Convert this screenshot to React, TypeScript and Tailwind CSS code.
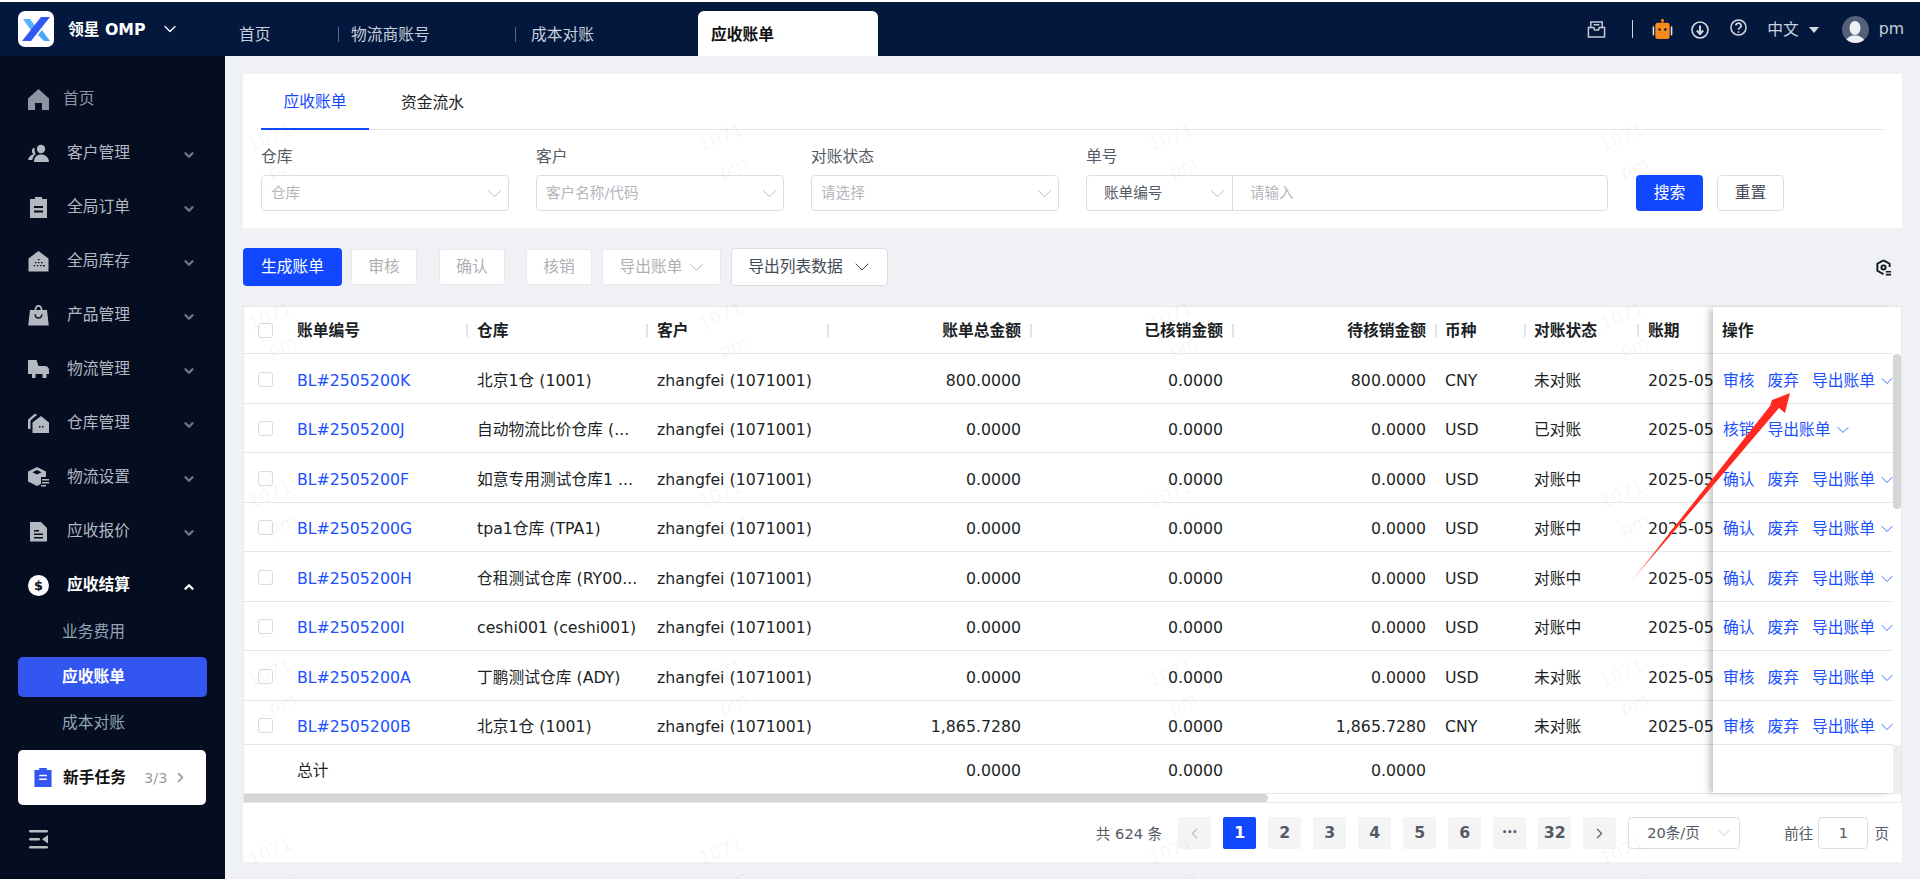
import { ChevronDown, ChevronLeft, ChevronRight, ChevronUp } from "lucide-react";
import type { ReactNode } from "react";

const FONT = "[font-family:'DejaVu_Sans','Noto_Sans_CJK_SC',sans-serif]";

// left block of the table: column width, cell padding and alignment
const COLS = [
  "w-[44px] pl-[14px]",
  "w-[180px] pl-[9px]",
  "w-[180px] pl-[9px]",
  "w-[181px] pl-[9px]",
  "w-[203px] pr-[11px] justify-end",
  "w-[202px] pr-[11px] justify-end",
  "w-[203px] pr-[11px] justify-end",
  "w-[89px] pl-[8px]",
  "w-[113px] pl-[8px]",
  "w-[75px] pl-[9px]",
];

const HEADS = ["", "账单编号", "仓库", "客户", "账单总金额", "已核销金额", "待核销金额", "币种", "对账状态", "账期"];

const ROWS = [
  { no: "BL#2505200K", wh: "北京1仓 (1001)", total: "800.0000", done: "0.0000", rest: "800.0000", cur: "CNY", st: "未对账", acts: ["审核", "废弃"] },
  { no: "BL#2505200J", wh: "自动物流比价仓库 (...", total: "0.0000", done: "0.0000", rest: "0.0000", cur: "USD", st: "已对账", acts: ["核销"] },
  { no: "BL#2505200F", wh: "如意专用测试仓库1 ...", total: "0.0000", done: "0.0000", rest: "0.0000", cur: "USD", st: "对账中", acts: ["确认", "废弃"] },
  { no: "BL#2505200G", wh: "tpa1仓库 (TPA1)", total: "0.0000", done: "0.0000", rest: "0.0000", cur: "USD", st: "对账中", acts: ["确认", "废弃"] },
  { no: "BL#2505200H", wh: "仓租测试仓库 (RY00...", total: "0.0000", done: "0.0000", rest: "0.0000", cur: "USD", st: "对账中", acts: ["确认", "废弃"] },
  { no: "BL#2505200I", wh: "ceshi001 (ceshi001)", total: "0.0000", done: "0.0000", rest: "0.0000", cur: "USD", st: "对账中", acts: ["确认", "废弃"] },
  { no: "BL#2505200A", wh: "丁鹏测试仓库 (ADY)", total: "0.0000", done: "0.0000", rest: "0.0000", cur: "USD", st: "未对账", acts: ["审核", "废弃"] },
  { no: "BL#2505200B", wh: "北京1仓 (1001)", total: "1,865.7280", done: "0.0000", rest: "1,865.7280", cur: "CNY", st: "未对账", acts: ["审核", "废弃"] },
];

const Ico = ({ children }: { children: ReactNode }) => (
  <svg viewBox="0 0 21 21" className="size-[21px] shrink-0" fill="currentColor">{children}</svg>
);

const MENU: { label: string; icon: ReactNode }[] = [
  { label: "客户管理", icon: <Ico><circle cx="13" cy="6" r="4.2" /><path d="M6 19c0-5 3-7.5 7-7.5s8 2.5 8 7.5zM6.5 4.5a3.4 3.4 0 0 0-.8 6.4C3 11.800.3 14 0 17h4.200c.5-2.500 1.800-4.500 3.500-5.700C6.800 9.500 6.500 7 6.500 4.500z" /></Ico> },
  { label: "全局订单", icon: <Ico><path fillRule="evenodd" d="M7 0h7v2h5v19H2V2h5zM6 9v2h9V9zm0 4.500v2h9v-2z" /></Ico> },
  { label: "全局库存", icon: <Ico><path fillRule="evenodd" d="M10.500 0 20.500 7.500V20.500H.5V7.500zM7 11v1.300h1.500V11zm3 0v1.300h1.500V11zm3 0v1.300h1.500V11zM5.500 14v1.300H7V14zm3.300 0v1.300h1.500V14zm3.200 0v1.300h1.500V14zm3 0v1.300H17V14zM10 8v1.300h1.500V8z" /></Ico> },
  { label: "产品管理", icon: <Ico><path fillRule="evenodd" d="M6.500 5C6.500 2 8.200 0 10.500 0s4 2 4 5H19l1.800 15.500H.2L2 5zm1.800 0h4.400c0-1.800-.9-3.200-2.200-3.200S8.300 3.200 8.300 5zM6.300 9.500c.4 2.800 2 4.300 4.200 4.300s3.800-1.500 4.200-4.300l-1.300-.3c-.3 2-1.400 3.100-2.900 3.100S7.900 11.200 7.600 9.200z" /></Ico> },
  { label: "物流管理", icon: <Ico><path d="M0 1h8.500l2 6H17c2.500 0 4 1.800 4 4v4h-2.500v4h-4v-4h-7v4H4v-4H0z" /></Ico> },
  { label: "仓库管理", icon: <Ico><path fillRule="evenodd" d="M13 3 21 9.500V20H4.500V9.500zM11 13v1.500h1.500V13zm3 0v1.500h1.500V13z" /><path d="M7 .5 9 2 2.500 7.500V16H0V6.500z" /></Ico> },
  { label: "物流设置", icon: <Ico><path fillRule="evenodd" d="M9 0 18 4.500V10h-5v7l-4 2-9-4.500V4.500zM9 3 4.500 5.300 9 7.500l4.500-2.200z" /><path d="M14 12h7v1.500h-7zM14 15h7v1.500h-7zM13 18h5v1.500h-5z" /></Ico> },
  { label: "应收报价", icon: <Ico><path fillRule="evenodd" d="M2 1h11l6 6v13.500H2zM6 9v1.500h5V9zm0 3.500V14h9v-1.500zM6 16v1.500h9V16z" /></Ico> },
];

function Sidebar() {
  return (
    <aside className="flex w-[225px] shrink-0 flex-col bg-[#050d20] pt-[16px]">
      <div className="flex h-[54px] items-center pl-[28px] text-[#8e94a1]">
        <Ico><path d="M10.500 0 21 9.500V21h-7v-7H7v7H0V9.500z" /></Ico>
        <span className="ml-[14px] text-[15.750px]">首页</span>
      </div>
      {MENU.map((m) => (
        <div key={m.label} className="flex h-[54px] items-center pl-[28px] pr-[29px] text-[#b4b8c0]">
          {m.icon}
          <span className="ml-[18px] flex-1 text-[15.750px]">{m.label}</span>
          <ChevronDown className="mt-[3px] size-[14px] text-[#71757f]" strokeWidth={4} />
        </div>
      ))}
      <div className="flex h-[54px] items-center pl-[28px] pr-[29px] text-white">
        <svg viewBox="0 0 21 21" className="size-[21px] shrink-0">
          <circle cx="10.500" cy="10.500" r="10.500" fill="#fff" />
          <text x="10.500" y="15" textAnchor="middle" fontSize="13" fontWeight="700" fill="#050d20">$</text>
        </svg>
        <span className="ml-[18px] flex-1 text-[15.750px] font-bold">应收结算</span>
        <ChevronUp className="mt-[3px] size-[14px]" strokeWidth={4} />
      </div>
      <div className="flex h-[40px] items-center pl-[62px] text-[15.750px] text-[#93a5b8]">业务费用</div>
      <div className="mx-[18px] mt-[5px] flex h-[40px] w-[189px] items-center rounded-[5px] bg-[#3355f0] pl-[44px] text-[15.750px] font-bold text-white">应收账单</div>
      <div className="mt-[5px] flex h-[41px] items-center pl-[62px] text-[15.750px] text-[#93a5b8]">成本对账</div>
      <div className="mx-[18px] mt-[7px] flex h-[55px] w-[188px] items-center rounded-[5px] bg-white pl-[16px]">
        <svg viewBox="0 0 18 20" className="h-[19px] w-[18px] shrink-0" fill="#3355f0">
          <path fillRule="evenodd" d="M5 0h8v2h5v18H0V2h5zM5 7v1.600h8V7zm0 4v1.600h8V11z" />
        </svg>
        <span className="ml-[11px] text-[15.750px] font-bold text-[#111]">新手任务</span>
        <span className="ml-[18px] whitespace-nowrap text-[14.600px] text-[#9a9ca3]">3/3</span>
        <ChevronRight className="ml-[5px] size-[15px] text-[#a3a7b0]" strokeWidth={3} />
      </div>
      <svg viewBox="0 0 19 19" className="ml-[29px] mt-[25px] size-[19px]" fill="#b9bcc3">
        <rect y="0" width="19" height="2.600" rx="1.300" />
        <rect y="8" width="11" height="2.600" rx="1.300" />
        <rect y="16" width="19" height="2.600" rx="1.300" />
        <path d="M19 5v8.500L13 9.300z" />
      </svg>
    </aside>
  );
}

function TopBar() {
  return (
    <header className="flex h-[54px] shrink-0 items-center bg-[#04183d] text-[#c8d0dc]">
      <svg viewBox="0 0 36 36" className="ml-[18px] size-[36px] shrink-0">
        <rect width="36" height="36" rx="7" fill="#fff" />
        <path d="M5 8h7l6 8-4 5z" fill="#47a7ff" opacity=".9" />
        <path d="M23 6h9L13 30H4z" fill="#3158f0" />
        <path d="M20 24l4-5 8 11h-6z" fill="#47a7ff" />
      </svg>
      <span className="ml-[14px] mt-[2px] w-[82px] whitespace-nowrap text-[15.750px] font-bold text-white">领星 OMP</span>
      <ChevronDown className="ml-[10px] size-[20px] text-white" strokeWidth={1.500} />
      <span className="ml-[59px] mt-[12px] w-[32px] text-[15.750px]">首页</span>
      <i className="ml-[67px] mt-[10px] h-[15px] w-px bg-[#5a6780]" />
      <span className="ml-[12px] mt-[12px] w-[79px] text-[15.750px]">物流商账号</span>
      <i className="ml-[85px] mt-[10px] h-[15px] w-px bg-[#5a6780]" />
      <span className="ml-[15px] mt-[12px] w-[64px] text-[15.750px]">成本对账</span>
      <div className="ml-[103px] mt-[9px] flex h-[45px] w-[180px] items-center rounded-t-[6px] bg-white pl-[13px] pt-[2px] text-[15.750px] font-bold text-[#111]">应收账单</div>
      <div className="ml-auto flex items-center pr-[16px]">
        <svg viewBox="0 0 20 20" className="size-[19px]" fill="none" stroke="#c3c9d3" strokeWidth="1.600">
          <path d="M4 8V2h12v6M1.500 8H7l1 2.500h4L13 8h5.500v10h-17zM7 5h6" />
        </svg>
        <i className="ml-[26px] h-[18px] w-px bg-[#cfd4dc]" />
        <svg viewBox="0 0 22 22" className="ml-[19px] size-[21px]">
          <path d="M10.200 0h1.600v4h-1.600z" fill="#f98b1a" />
          <circle cx="11" cy="1.500" r="1.500" fill="#f98b1a" />
          <rect x="3.500" y="4" width="15" height="17" rx="2.500" fill="#f98b1a" />
          <circle cx="8" cy="11" r="1.300" fill="#04173a" />
          <circle cx="14" cy="11" r="1.300" fill="#04173a" />
          <path d="M1.500 8.500v8M20.500 8.500v8" stroke="#e8e8e8" strokeWidth="1.600" strokeLinecap="round" />
        </svg>
        <svg viewBox="0 0 18 18" className="ml-[18px] mt-[2px] size-[18px]" fill="none" stroke="#d4d9e0" strokeWidth="1.600">
          <circle cx="9" cy="9" r="8" />
          <path d="M9 4.500v8M5.800 9.500 9 13l3.200-3.500" strokeWidth="2" />
        </svg>
        <svg viewBox="0 0 18 18" className="ml-[21px] mb-[3px] size-[17px]" fill="none" stroke="#d4d9e0" strokeWidth="1.600">
          <circle cx="9" cy="9" r="8" />
          <path d="M6.300 7a2.700 2.700 0 1 1 4 2.400C9.300 10 9 10.500 9 11.500M9 13v1.500" strokeWidth="1.800" />
        </svg>
        <span className="ml-[20px] mt-[1px] text-[15.750px]">中文</span>
        <span className="ml-[10px] mt-[1px] border-x-[5px] border-t-[6px] border-x-transparent border-t-[#d4d9e0]" />
        <div className="ml-[23px] flex size-[27px] items-end justify-center overflow-hidden rounded-full bg-[#53617a]">
          <svg viewBox="0 0 24 24" className="size-[24px]" fill="#eef0f3">
            <ellipse cx="12" cy="9" rx="5.500" ry="7" />
            <path d="M2 24c0-5 5-6 7-7.500h6c2 1.500 7 2.500 7 7.500z" />
          </svg>
        </div>
        <span className="ml-[10px] text-[15.750px]">pm</span>
      </div>
    </header>
  );
}

const Field = ({ label, text, width = "w-[247.500px]" }: { label: string; text: string; width?: string }) => (
  <div className={`flex flex-col ${width}`}>
    <label className="flex h-[22px] items-center pt-[2px] text-[15.750px] text-[#555b66]">{label}</label>
    <div className="mt-[8px] flex h-[36px] items-center justify-between rounded-[4px] border border-[#dcdee4] pl-[9px] pr-px text-[14.600px] text-[#b4b6bc]">
      {text}
      <ChevronDown className="size-[25px] text-[#b8bcc5]" strokeWidth={0.900} />
    </div>
  </div>
);

function FilterCard() {
  return (
    <section className="h-[154px] bg-white px-[18px]">
      <div className="flex h-[56px] border-b border-[#e4e6ec]">
        <div className="flex h-[56px] w-[108px] items-center justify-center border-b-2 border-[#1147ff] pt-[2px] text-[15.750px] text-[#1147ff]">应收账单</div>
        <div className="ml-[32px] flex items-center pt-[2px] text-[15.750px] text-[#222]">资金流水</div>
      </div>
      <div className="mt-[15px] flex items-end">
        <div className="flex gap-[27.500px]">
          <Field label="仓库" text="仓库" />
          <Field label="客户" text="客户名称/代码" />
          <Field label="对账状态" text="请选择" />
        </div>
        <div className="ml-[27.500px] w-[522px]">
          <label className="flex h-[22px] items-center pt-[2px] text-[15.750px] text-[#555b66]">单号</label>
          <div className="mt-[8px] flex h-[36px] rounded-[4px] border border-[#dcdee4] text-[14.600px]">
            <div className="flex w-[146px] items-center justify-between border-r border-[#dcdee4] pl-[17px] pr-[2px] text-[#555b66]">
              账单编号
              <ChevronDown className="size-[25px] text-[#b8bcc5]" strokeWidth={0.900} />
            </div>
            <div className="flex items-center pl-[17px] text-[#b4b6bc]">请输入</div>
          </div>
        </div>
        <button className="ml-[28px] h-[36px] w-[67px] rounded-[4px] bg-[#1147ff] text-[15.750px] text-white">搜索</button>
        <button className="ml-[14px] h-[36px] w-[67px] rounded-[4px] border border-[#dcdee4] text-[15.750px] text-[#444a55]">重置</button>
      </div>
    </section>
  );
}

const GhostBtn = ({ children, width }: { children: ReactNode; width: string }) => (
  <button className={`flex h-[36px] items-center justify-center rounded-[3px] border border-[#e8e9ee] bg-white text-[15.750px] text-[#adafb5] ${width}`}>{children}</button>
);

function Toolbar() {
  return (
    <div className="mt-[20px] flex h-[38px] items-center">
      <button className="h-[38px] w-[99px] rounded-[4px] bg-[#1147ff] text-[15.750px] text-white">生成账单</button>
      <div className="ml-[9px]"><GhostBtn width="w-[66px]">审核</GhostBtn></div>
      <div className="ml-[22px]"><GhostBtn width="w-[66px]">确认</GhostBtn></div>
      <div className="ml-[21px]"><GhostBtn width="w-[66px]">核销</GhostBtn></div>
      <div className="ml-[10px]">
        <GhostBtn width="w-[119px] gap-[2px] pl-[4px]">导出账单<ChevronDown className="size-[23px]" strokeWidth={1} /></GhostBtn>
      </div>
      <button className="ml-[10px] flex h-[38px] w-[157px] items-center justify-center gap-[7px] rounded-[4px] border border-[#dcdee4] bg-white pl-[3px] text-[15.750px] text-[#444a55]">
        导出列表数据
        <ChevronDown className="size-[24px]" strokeWidth={1} />
      </button>
      <svg viewBox="0 0 18 18" className="ml-auto mr-[10px] size-[17px]" fill="none" stroke="#11151d" strokeWidth="2">
        <path d="M9 1.500 15.500 5v3.500M9 16 2.500 12.500V5L9 1.500" />
        <circle cx="9" cy="9" r="2.200" />
        <path d="M11.500 13.500h5.500M11.500 16.500h5.500" strokeWidth="1.800" />
      </svg>
    </div>
  );
}

const Check = ({ inRow }: { inRow?: boolean }) => (
  <span className={`block size-[15px] rounded-[3px] border border-[#d9dade] bg-white ${inRow ? "mb-[3px]" : ""}`} />
);

function Actions({ acts }: { acts: string[] }) {
  return (
    <div className="flex items-center gap-[13px] whitespace-nowrap pl-[10px] text-[15.750px] text-[#1a50ff]">
      {acts.map((a) => <span key={a} className="shrink-0">{a}</span>)}
      <span className="flex shrink-0 items-center gap-[2px]">
        导出账单
        <ChevronDown className="size-[20px]" strokeWidth={1} />
      </span>
    </div>
  );
}

function DataTable() {
  return (
    <section className="mt-[20px] border border-[#e8e9ee] bg-white text-[15.750px] text-[#1c1f26]">
      <div className="flex">
        <div className="w-[1469px] shrink-0 overflow-hidden">
          <div className="flex h-[47px] w-[1570px] border-b border-[#e6e7ec]">
            {HEADS.map((h, i) => (
              <div key={i} className={`relative flex items-center font-bold ${i > 0 ? "pt-[2px]" : ""} ${COLS[i]}`}>
                {i === 0 ? <Check /> : h}
                {i > 0 && i < 9 && <i className="absolute right-0 top-[17px] h-[13px] w-[2px] bg-[#e2e3e6]" />}
              </div>
            ))}
          </div>
          {ROWS.map((r, idx) => {
            const last = idx === ROWS.length - 1;
            const cells = [<Check inRow />, <span className="text-[#1a50ff]">{r.no}</span>, r.wh, "zhangfei (1071001)", r.total, r.done, r.rest, r.cur, r.st, "2025-05-01"];
            return (
              <div key={r.no} className={`flex w-[1570px] border-b border-[#e6e7ec] ${last ? "h-[44px] pt-[10px]" : "h-[49.500px] pt-[5px]"}`}>
                {cells.map((c, i) => (
                  <div key={i} className={`flex items-center whitespace-nowrap ${COLS[i]}`}>{c}</div>
                ))}
              </div>
            );
          })}
          <div className="flex h-[48.500px] w-[1570px] pt-[5px]">
            {["", "总计", "", "", "0.0000", "0.0000", "0.0000", "", "", ""].map((c, i) => (
              <div key={i} className={`flex items-center ${COLS[i]}`}>{c}</div>
            ))}
          </div>
        </div>
        <div className="z-10 w-[180px] shrink-0 bg-white shadow-[-5px_1px_6px_-1px_rgba(0,0,0,0.22)]">
          <div className="flex h-[47px] items-center border-b border-[#e6e7ec] pl-[9px] pt-[2px] font-bold">操作</div>
          {ROWS.map((r, idx) => (
            <div key={r.no} className={`flex items-center border-b border-[#e6e7ec] ${idx === ROWS.length - 1 ? "h-[44px] pt-[10px]" : "h-[49.500px] pt-[5px]"}`}>
              <Actions acts={r.acts} />
            </div>
          ))}
          <div className="h-[48.500px]" />
        </div>
        <div className="z-10 flex w-[8px] shrink-0 flex-col bg-transparent">
          <div className="h-[47px]" />
          <div className="h-[155px] rounded-[4px] bg-[#d6d6d6]" />
          <div className="mt-auto h-[48.500px] bg-[#eeeeee]" />
        </div>
      </div>
      <div className="h-[9px] border-t border-[#e6e7ec]">
        <div className="h-[8px] w-[1024px] rounded-r-[4px] bg-[#d6d6d6]" />
      </div>
    </section>
  );
}

function Pager() {
  const btn = "flex h-[32px] w-[33px] items-center justify-center rounded-[2px] bg-[#f4f4f5] text-[15.750px] font-bold text-[#555b66]";
  return (
    <div className="flex h-[59px] items-start justify-end bg-white pr-[13px] pt-[14px] text-[14.600px] text-[#555b66]">
      <div className="flex h-[32px] items-center whitespace-nowrap pt-[2px]">共 624 条</div>
      <div className="ml-[16px] flex gap-[12px]">
        <span className={btn}><ChevronLeft className="size-[17px] text-[#b8bcc5]" strokeWidth={1.500} /></span>
        <span className="flex h-[32px] w-[33px] items-center justify-center rounded-[2px] bg-[#1147ff] text-[15.750px] font-bold text-white">1</span>
        {["2", "3", "4", "5", "6", "•••", "32"].map((p) => (
          <span key={p} className={p === "•••" ? `${btn} !text-[8px]` : btn}>{p}</span>
        ))}
        <span className={btn}><ChevronRight className="size-[17px]" strokeWidth={1.500} /></span>
      </div>
      <div className="ml-[12px] flex h-[32px] w-[112px] items-center justify-between whitespace-nowrap rounded-[4px] border border-[#dcdee4] pl-[18px] pr-[5px]">
        20条/页
        <ChevronDown className="size-[20px] text-[#b8bcc5]" strokeWidth={1} />
      </div>
      <div className="ml-[44px] flex h-[32px] items-center pt-[2px]">前往</div>
      <div className="ml-[5px] flex h-[32px] w-[50px] items-center justify-center rounded-[4px] border border-[#dcdee4]">1</div>
      <div className="ml-[6px] flex h-[32px] items-center pt-[2px]">页</div>
    </div>
  );
}

// faint "1071 / pm" marks laid over the whole content area
function Watermarks() {
  const marks = Array.from({ length: 20 });
  return (
    <div className="pointer-events-none absolute left-[26px] top-[66px] z-20 grid grid-cols-[repeat(4,450.500px)] auto-rows-[178.500px]">
      {marks.map((_, i) => (
        <div key={i} className="flex h-[60px] w-[50px] -rotate-[22deg] flex-col items-center text-[18px] text-black/[0.05]">
          <span>1071</span>
          <span className="mt-[6px]">pm</span>
        </div>
      ))}
    </div>
  );
}

export default function App() {
  return (
    <div className={`relative flex h-[879px] w-[1920px] flex-col overflow-hidden bg-white pt-[2px] ${FONT}`}>
      <TopBar />
      <div className="flex min-h-0 flex-1">
        <Sidebar />
        <main className="relative min-w-0 flex-1 overflow-hidden bg-[#eff1f5] px-[18px] pt-[18px]">
          <FilterCard />
          <Toolbar />
          <DataTable />
          <Pager />
          <Watermarks />
        </main>
      </div>
      {/* hand-drawn annotation on the screenshot */}
      <svg viewBox="0 0 1920 879" className="pointer-events-none absolute left-0 top-0 z-30 h-[879px] w-[1920px]">
        <defs>
          <linearGradient id="arrow" x1="1630" y1="583" x2="1790" y2="393" gradientUnits="userSpaceOnUse">
            <stop offset="0" stopColor="#ff2a1f" stopOpacity="0.25" />
            <stop offset="0.2" stopColor="#ff2a1f" />
            <stop offset="1" stopColor="#ff2a1f" />
          </linearGradient>
        </defs>
        <polygon points="1630,583 1770,406 1772,400 1790,393 1785,413 1779,408" fill="url(#arrow)" />
      </svg>
    </div>
  );
}
